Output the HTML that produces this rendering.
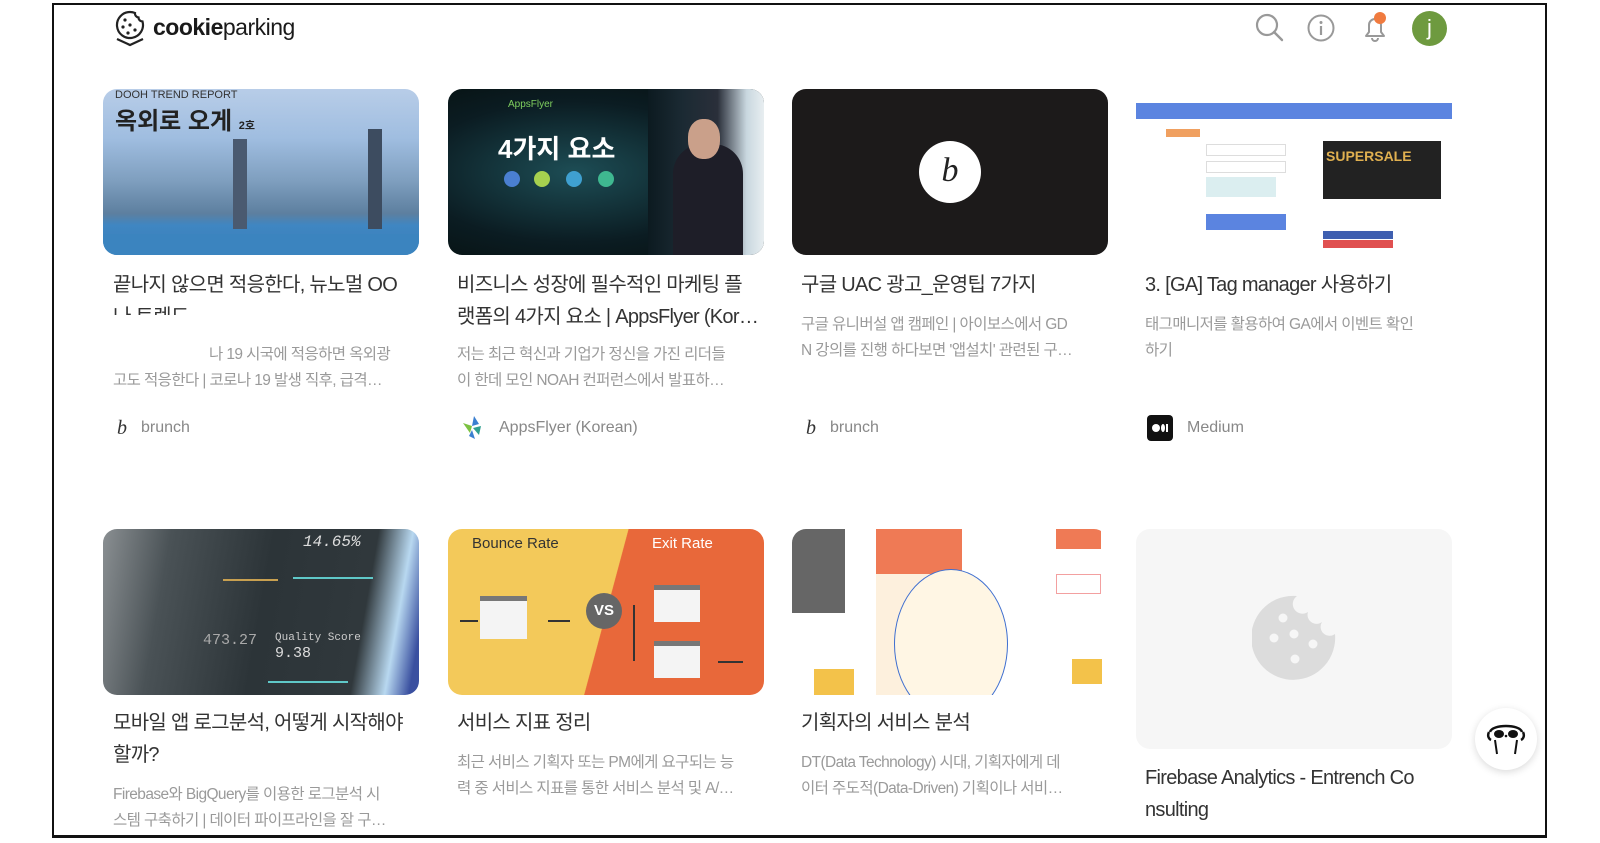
<!DOCTYPE html>
<html><head><meta charset="utf-8">
<style>
*{margin:0;padding:0;box-sizing:border-box}
body{width:1600px;height:843px;background:#fff;position:relative;overflow:hidden;font-family:"Liberation Sans","Noto Sans CJK KR",sans-serif}
.frame{position:absolute;left:52px;top:3px;width:1495px;height:835px;border:2px solid #111;border-width:2px 2px 3px 2px}
.abs{position:absolute}
.img{position:absolute;border-radius:14px;overflow:hidden;height:166px;width:316px}
.t{position:absolute;font-size:20px;line-height:32px;color:#333;width:304px;white-space:nowrap;overflow:hidden;text-overflow:ellipsis;letter-spacing:-0.7px}
.d{position:absolute;font-size:15.5px;line-height:26px;color:#9a9a9a;width:298px;letter-spacing:-0.6px}
.d div{white-space:nowrap;overflow:hidden;text-overflow:ellipsis}
.s{position:absolute;font-size:16px;color:#888;display:flex;align-items:center;gap:14px;height:28px}
</style></head><body>
<div class="frame"></div>

<!-- header -->
<svg class="abs" style="left:113px;top:9px" width="34" height="38" viewBox="0 0 34 38"><path d="M17 3a13 13 0 1 0 12.5 9.5a4 4 0 0 1-4-4a4 4 0 0 1-3.5-4.5A13 13 0 0 0 17 3z" fill="none" stroke="#222" stroke-width="2.2"/><circle cx="12" cy="11" r="1.6" fill="#222"/><circle cx="10" cy="18" r="1.6" fill="#222"/><circle cx="17" cy="16" r="1.6" fill="#222"/><circle cx="22" cy="21" r="1.6" fill="#222"/><circle cx="15" cy="24" r="1.6" fill="#222"/><path d="M4 30l13 6l13-6" fill="none" stroke="#222" stroke-width="2.2"/></svg>
<div class="abs" style="left:153px;top:14px;font-size:23px;color:#1a1a1a;letter-spacing:-0.5px"><b>cookie</b>parking</div>

<svg class="abs" style="left:1255px;top:13px" width="30" height="30" viewBox="0 0 30 30"><circle cx="12" cy="12" r="10" fill="none" stroke="#999" stroke-width="2.2"/><path d="M19 19l8 8" stroke="#999" stroke-width="2.4" stroke-linecap="round"/></svg>
<svg class="abs" style="left:1307px;top:14px" width="28" height="28" viewBox="0 0 28 28"><circle cx="14" cy="14" r="12.5" fill="none" stroke="#999" stroke-width="2"/><circle cx="14" cy="8.5" r="1.5" fill="#999"/><path d="M14 12v9" stroke="#999" stroke-width="2.2"/></svg>
<svg class="abs" style="left:1360px;top:12px" width="30" height="32" viewBox="0 0 30 32"><path d="M6 24h18l-3-4v-7a6 6 0 0 0-12 0v7z" fill="none" stroke="#999" stroke-width="2" stroke-linejoin="round"/><path d="M12 26a3 3 0 0 0 6 0" fill="none" stroke="#999" stroke-width="2"/><circle cx="20" cy="6" r="6" fill="#f07b3f"/></svg>
<div class="abs" style="left:1412px;top:11px;width:35px;height:35px;border-radius:50%;background:#6e9a3f;color:#fff;font-size:22px;text-align:center;line-height:33px">j</div>

<!-- row 1 images -->
<div class="img" style="left:103px;top:89px;background:linear-gradient(180deg,#b8cde8 0%,#9fbde0 30%,#7f9fbf 55%,#5d7f9f 75%,#3f86c2 82%,#3a7fb9 100%)">
 <div class="abs" style="left:12px;top:0;font-size:11px;color:#333">DOOH TREND REPORT</div>
 <div class="abs" style="left:12px;top:12px;font-size:24px;font-weight:bold;color:#222">옥외로 오게 <span style="font-size:11px">2호</span></div>
 <div class="abs" style="left:130px;top:50px;width:14px;height:90px;background:#4a5a70"></div>
 <div class="abs" style="left:265px;top:40px;width:14px;height:100px;background:#3d4c60"></div>
 <div class="abs" style="left:0;top:145px;width:316px;height:21px;background:#3b84bf"></div>
</div>
<div class="img" style="left:448px;top:89px;background:radial-gradient(ellipse at 40% 50%,#1d4d55 0%,#0b1c22 60%,#06100f 100%)">
 <div class="abs" style="left:0;top:40px;width:316px;text-align:left;padding-left:50px;font-size:26px;font-weight:bold;color:#fff">4가지 요소</div>
 <div class="abs" style="left:60px;top:10px;font-size:10px;color:#7fcf5f">AppsFlyer</div>
 <div class="abs" style="left:56px;top:82px;width:16px;height:16px;border-radius:50%;background:#4a7fd0"></div>
 <div class="abs" style="left:86px;top:82px;width:16px;height:16px;border-radius:50%;background:#a6d04f"></div>
 <div class="abs" style="left:118px;top:82px;width:16px;height:16px;border-radius:50%;background:#3fa0d0"></div>
 <div class="abs" style="left:150px;top:82px;width:16px;height:16px;border-radius:50%;background:#3fb890"></div>
 <div class="abs" style="left:200px;top:0;width:116px;height:166px;background:linear-gradient(90deg,#0c1a20,#1b2a33 30%,#2a2f3a 60%,#c9d7df 85%,#e8eef1)"></div>
 <div class="abs" style="left:225px;top:55px;width:70px;height:111px;border-radius:30px 30px 0 0;background:#1e1e28"></div>
 <div class="abs" style="left:240px;top:30px;width:32px;height:40px;border-radius:45%;background:#caa08a"></div>
</div>
<div class="img" style="left:792px;top:89px;background:#1c1a1a">
 <div class="abs" style="left:127px;top:52px;width:62px;height:62px;border-radius:50%;background:#fff;font-size:34px;font-style:italic;text-align:center;line-height:60px;color:#222;font-family:'Liberation Serif',serif">b</div>
</div>
<div class="img" style="left:1136px;top:89px;background:#fff;border-radius:0">
 <div class="abs" style="left:0;top:14px;width:316px;height:16px;background:#5b84e0"></div>
 <div class="abs" style="left:70px;top:55px;width:80px;height:12px;border:1px solid #ddd"></div>
 <div class="abs" style="left:70px;top:72px;width:80px;height:12px;border:1px solid #ddd"></div>
 <div class="abs" style="left:70px;top:88px;width:70px;height:20px;background:#dbeef0"></div>
 <div class="abs" style="left:70px;top:125px;width:80px;height:16px;background:#5b84e0"></div>
 <div class="abs" style="left:187px;top:52px;width:118px;height:58px;background:#222"></div>
 <div class="abs" style="left:190px;top:59px;font-size:14px;color:#e0b050;font-weight:bold">SUPERSALE</div>
 <div class="abs" style="left:187px;top:142px;width:70px;height:8px;background:#3f5fb0"></div>
 <div class="abs" style="left:187px;top:151px;width:70px;height:8px;background:#e05050"></div>
 <div class="abs" style="left:30px;top:40px;width:34px;height:8px;background:#f0a060"></div>
</div>

<!-- row 1 text -->
<div class="t" style="left:113px;top:269px;height:46px;white-space:normal">끝나지 않으면 적응한다, 뉴노멀 OO<br>나 트렌드</div>
<div class="d" style="left:113px;top:342px"><div style="padding-left:96px">나 19 시국에 적응하면 옥외광</div><div>고도 적응한다 | 코로나 19 발생 직후, 급격…</div></div>
<div class="s" style="left:117px;top:414px"><span style="font-family:'Liberation Serif',serif;font-style:italic;font-size:20px;color:#333">b</span>brunch</div>

<div class="t" style="left:457px;top:269px;text-overflow:clip">비즈니스 성장에 필수적인 마케팅 플</div>
<div class="t" style="left:457px;top:301px">랫폼의 4가지 요소 | AppsFlyer (Korean)</div>
<div class="d" style="left:457px;top:342px"><div>저는 최근 혁신과 기업가 정신을 가진 리더들</div><div>이 한데 모인 NOAH 컨퍼런스에서 발표하…</div></div>
<div class="s" style="left:461px;top:414px"><svg width="24" height="26" viewBox="0 0 24 26"><path d="M2 8l9 3l-2 7z" fill="#7cc242"/><path d="M13 1l5 8l-7 2z" fill="#3a7fd0"/><path d="M12 13l8-2l-2 9z" fill="#2f9f8f"/><path d="M11 15l3 9l-6-3z" fill="#3a7fd0"/></svg>AppsFlyer (Korean)</div>

<div class="t" style="left:801px;top:269px">구글 UAC 광고_운영팁 7가지</div>
<div class="d" style="left:801px;top:312px"><div>구글 유니버설 앱 캠페인 | 아이보스에서 GD</div><div>N 강의를 진행 하다보면 '앱설치' 관련된 구…</div></div>
<div class="s" style="left:806px;top:414px"><span style="font-family:'Liberation Serif',serif;font-style:italic;font-size:20px;color:#333">b</span>brunch</div>

<div class="t" style="left:1145px;top:269px">3. [GA] Tag manager 사용하기</div>
<div class="d" style="left:1145px;top:312px"><div>태그매니저를 활용하여 GA에서 이벤트 확인</div><div>하기</div></div>
<div class="s" style="left:1147px;top:414px"><span style="width:26px;height:26px;background:#111;border-radius:4px;display:inline-flex;align-items:center;justify-content:center;gap:1px"><i style="width:8px;height:8px;border-radius:50%;background:#fff"></i><i style="width:4px;height:8px;border-radius:50%;background:#fff"></i><i style="width:2px;height:8px;background:#fff"></i></span>Medium</div>

<!-- row 2 images -->
<div class="img" style="left:103px;top:529px;background:linear-gradient(100deg,#8a8f92 0%,#4a5256 20%,#2c3438 50%,#30383c 80%,#b8d8f0 90%,#3a50a0 97%)">
 <div class="abs" style="left:200px;top:4px;font-family:'Liberation Mono',monospace;font-size:16px;color:#ddd;font-style:italic">14.65%</div>
 <div class="abs" style="left:172px;top:103px;font-family:'Liberation Mono',monospace;font-size:11px;color:#ccc">Quality Score</div>
 <div class="abs" style="left:172px;top:116px;font-family:'Liberation Mono',monospace;font-size:15px;color:#ddd">9.38</div>
 <div class="abs" style="left:100px;top:103px;font-family:'Liberation Mono',monospace;font-size:15px;color:#aaa">473.27</div>
 <div class="abs" style="left:190px;top:48px;width:80px;height:2px;background:#5fc8c8"></div>
 <div class="abs" style="left:165px;top:152px;width:80px;height:2px;background:#5fc8c8"></div>
 <div class="abs" style="left:120px;top:50px;width:55px;height:2px;background:#c8a050"></div>
</div>
<div class="img" style="left:448px;top:529px;background:linear-gradient(105deg,#f3c95a 0%,#f3c95a 50%,#e8683a 50.2%,#e8683a 100%)">
 <div class="abs" style="left:24px;top:6px;font-size:15px;color:#333">Bounce Rate</div>
 <div class="abs" style="left:204px;top:6px;font-size:15px;color:#fff">Exit Rate</div>
 <div class="abs" style="left:32px;top:67px;width:47px;height:43px;background:#f4f4f4;border-top:5px solid #777"></div>
 <div class="abs" style="left:138px;top:64px;width:36px;height:36px;border-radius:50%;background:#666;color:#fff;font-weight:bold;font-size:15px;text-align:center;line-height:36px">VS</div>
 <div class="abs" style="left:206px;top:56px;width:46px;height:37px;background:#f4f4f4;border-top:5px solid #777"></div>
 <div class="abs" style="left:206px;top:112px;width:46px;height:37px;background:#f4f4f4;border-top:5px solid #777"></div>
 <div class="abs" style="left:12px;top:91px;width:18px;height:2px;background:#333"></div>
 <div class="abs" style="left:100px;top:91px;width:22px;height:2px;background:#333"></div>
 <div class="abs" style="left:185px;top:76px;width:2px;height:56px;background:#333"></div>
 <div class="abs" style="left:270px;top:132px;width:25px;height:2px;background:#333"></div>
</div>
<div class="img" style="left:792px;top:529px;background:#fff">
 <div class="abs" style="left:0;top:0;width:53px;height:84px;background:#666"></div>
 <div class="abs" style="left:84px;top:0;width:86px;height:45px;background:#ef7a55"></div>
 <div class="abs" style="left:84px;top:45px;width:92px;height:121px;background:#fdf0dd"></div>
 <div class="abs" style="left:102px;top:40px;width:114px;height:150px;border-radius:50%;border:1px solid #3f6fd0;background:#fff6e4"></div>
 <div class="abs" style="left:264px;top:0;width:45px;height:20px;background:#ef7a55"></div>
 <div class="abs" style="left:264px;top:45px;width:45px;height:20px;border:1px solid #f3a0a0"></div>
 <div class="abs" style="left:22px;top:140px;width:40px;height:26px;background:#f3c24a"></div>
 <div class="abs" style="left:280px;top:130px;width:30px;height:25px;background:#f3c24a"></div>
</div>
<div class="img" style="left:1136px;top:529px;height:220px;background:#f6f6f6">
 <svg class="abs" style="left:116px;top:64px" width="86" height="90" viewBox="0 0 86 90"><path d="M45 3a42 42 0 1 0 38 38a9 9 0 0 1-13-12a9 9 0 0 1-14-10a9 9 0 0 1-11-16z" fill="#dcdcdc"/><circle cx="31" cy="25" r="4.5" fill="#f6f6f6"/><circle cx="22" cy="45" r="4.5" fill="#f6f6f6"/><circle cx="42" cy="41" r="4.5" fill="#f6f6f6"/><circle cx="61" cy="51" r="4.5" fill="#f6f6f6"/><circle cx="43" cy="66" r="4.5" fill="#f6f6f6"/></svg>
</div>

<!-- row 2 text -->
<div class="t" style="left:113px;top:707px;text-overflow:clip">모바일 앱 로그분석, 어떻게 시작해야</div>
<div class="t" style="left:113px;top:739px">할까?</div>
<div class="d" style="left:113px;top:782px"><div>Firebase와 BigQuery를 이용한 로그분석 시</div><div>스템 구축하기 | 데이터 파이프라인을 잘 구…</div></div>

<div class="t" style="left:457px;top:707px">서비스 지표 정리</div>
<div class="d" style="left:457px;top:750px"><div>최근 서비스 기획자 또는 PM에게 요구되는 능</div><div>력 중 서비스 지표를 통한 서비스 분석 및 A/…</div></div>

<div class="t" style="left:801px;top:707px">기획자의 서비스 분석</div>
<div class="d" style="left:801px;top:750px"><div>DT(Data Technology) 시대, 기획자에게 데</div><div>이터 주도적(Data-Driven) 기획이나 서비…</div></div>

<div class="t" style="left:1145px;top:762px;text-overflow:clip">Firebase Analytics - Entrench Co</div>
<div class="t" style="left:1145px;top:794px">nsulting</div>

<div class="abs" style="left:1475px;top:708px;width:62px;height:62px;border-radius:50%;background:#fff;box-shadow:0 2px 8px rgba(0,0,0,0.15)">
 <svg class="abs" style="left:10px;top:14px" width="42" height="36" viewBox="0 0 42 36"><path d="M5 10c2-8 30-8 32 0" fill="none" stroke="#111" stroke-width="2.5"/><path d="M4 10c-2 4 0 7 2 8M38 10c2 4 0 7-2 8" fill="none" stroke="#111" stroke-width="2.5"/><ellipse cx="14" cy="12" rx="5" ry="4" fill="#111"/><ellipse cx="28" cy="12" rx="5" ry="4" fill="#111"/><circle cx="21" cy="14" r="1.3" fill="#111"/><path d="M10 18l2 14M32 18l-2 14" stroke="#111" stroke-width="2"/></svg>
</div>
</body></html>
